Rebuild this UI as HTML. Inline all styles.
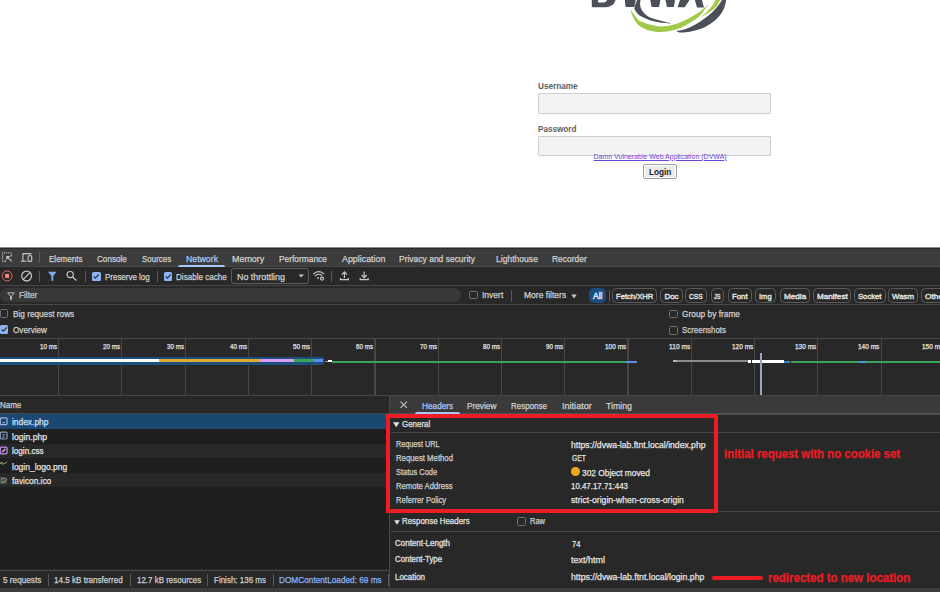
<!DOCTYPE html>
<html><head><meta charset="utf-8"><style>
html,body{margin:0;padding:0;}
body{width:940px;height:592px;overflow:hidden;position:relative;background:#fff;font-family:'Liberation Sans', sans-serif;}
.t{position:absolute;white-space:pre;font-family:'Liberation Sans', sans-serif;-webkit-text-stroke:0.25px currentColor;}
</style></head><body>
<svg style="position:absolute;left:0;top:0" width="940" height="40" viewBox="0 0 940 40">
<g fill="#4b4f58">
<path fill-rule="evenodd" d="M591.8,0 L591.8,6.6 Q591.8,7.3 592.5,7.3 L604,7.3 C611,7.3 614.5,4.2 615.5,0 Z M598.2,0 L598.2,2.5 L603,2.5 C605.5,2.5 606.8,1.3 607.1,0 Z"/>
<path d="M624.8,0 L625.6,6.9 L634.3,6.9 L635.8,0 Z"/>
<path d="M650.3,0 L651.6,7 L659,7 L660.4,0 Z"/>
<path d="M665.5,0 L667,7 L673.9,7 L675,0 Z"/>
<path d="M677.6,7.2 L684.8,7.2 L689.5,0 L680,0 Z"/>
<path d="M694.9,0 L701.9,0 L704,7.4 L697,7.4 Z"/>
<path d="M637.2,0 C636.87,0.83 635.63,3.50 635.20,5.00 C634.77,6.50 634.30,7.67 634.60,9.00 C634.90,10.33 635.93,11.78 637.00,13.00 C638.07,14.22 638.83,15.08 641.00,16.30 C643.17,17.52 646.83,19.27 650.00,20.30 C653.17,21.33 656.43,21.95 660.00,22.50 C663.57,23.05 669.50,23.42 671.40,23.60 L671.4,23.6 C669.50,23.10 663.57,21.62 660.00,20.60 C656.43,19.58 652.58,18.68 650.00,17.50 C647.42,16.32 645.97,14.92 644.50,13.50 C643.03,12.08 641.93,10.50 641.20,9.00 C640.47,7.50 640.22,6.00 640.10,4.50 C639.98,3.00 640.43,0.75 640.50,0.00 Z"/>
<path d="M676.2,31 C677.50,30.75 681.70,30.13 684.00,29.50 C686.30,28.87 687.48,28.40 690.00,27.20 C692.52,26.00 696.07,24.20 699.10,22.30 C702.13,20.40 705.67,17.85 708.20,15.80 C710.73,13.75 712.57,11.80 714.30,10.00 C716.03,8.20 717.33,6.67 718.60,5.00 C719.87,3.33 721.35,0.83 721.90,0.00 L726.2,0 C725.87,1.33 725.33,5.33 724.20,8.00 C723.07,10.67 721.52,13.50 719.40,16.00 C717.28,18.50 714.37,20.95 711.50,23.00 C708.63,25.05 705.78,26.83 702.20,28.30 C698.62,29.77 693.70,31.10 690.00,31.80 C686.30,32.50 682.30,32.63 680.00,32.50 C677.70,32.37 676.83,31.25 676.20,31.00 Z"/>
</g>
<g fill="#a3c94a">
<path d="M630.3,9 C630.67,10.17 631.55,13.78 632.50,16.00 C633.45,18.22 634.75,20.60 636.00,22.30 C637.25,24.00 637.67,24.78 640.00,26.20 C642.33,27.62 646.67,29.82 650.00,30.80 C653.33,31.78 656.67,32.07 660.00,32.10 C663.33,32.13 666.67,31.67 670.00,31.00 C673.33,30.33 676.67,29.47 680.00,28.10 C683.33,26.73 686.67,24.90 690.00,22.80 C693.33,20.70 696.92,18.60 700.00,15.50 C703.08,12.40 707.08,6.08 708.50,4.20 L708.5,4.2 C707.08,5.42 703.08,9.23 700.00,11.50 C696.92,13.77 693.33,15.97 690.00,17.80 C686.67,19.63 683.33,21.23 680.00,22.50 C676.67,23.77 673.33,24.73 670.00,25.40 C666.67,26.07 663.33,26.63 660.00,26.50 C656.67,26.37 653.33,25.53 650.00,24.60 C646.67,23.67 642.40,22.25 640.00,20.90 C637.60,19.55 637.22,18.48 635.60,16.50 C633.98,14.52 631.18,10.25 630.30,9.00 Z"/>
<path d="M699.1,18.2 C700.12,17.42 703.38,15.12 705.20,13.50 C707.02,11.88 708.62,10.08 710.00,8.50 C711.38,6.92 712.63,5.42 713.50,4.00 C714.37,2.58 714.92,0.67 715.20,0.00 L720.1,0 C719.67,0.83 718.47,3.58 717.50,5.00 C716.53,6.42 715.85,7.17 714.30,8.50 C712.75,9.83 710.73,11.38 708.20,13.00 C705.67,14.62 700.62,17.33 699.10,18.20 Z"/>
</g>
</svg>
<div style="position:absolute;left:538px;top:93px;width:233px;height:21px;background:#f3f3f3;box-sizing:border-box;border:1px solid #cfcfcf;border-radius:1px;"></div><div style="position:absolute;left:538px;top:136px;width:233px;height:20px;background:#f3f3f3;box-sizing:border-box;border:1px solid #cfcfcf;border-radius:1px;"></div><div style="position:absolute;left:643px;top:164px;width:34px;height:15px;background:#ececec;box-sizing:border-box;border:1px solid #a0a0a0;border-radius:2px;box-shadow:inset 0 0 0 1px #fff;"></div><div style="position:absolute;left:0px;top:247px;width:940px;height:1px;background:#8a8a8a;"></div><div style="position:absolute;left:0px;top:248px;width:940px;height:1px;background:#2a2a2a;"></div><div style="position:absolute;left:0px;top:266px;width:940px;height:326px;background:#282828;"></div><div style="position:absolute;left:0px;top:249px;width:940px;height:17px;background:#3c3c3c;"></div><div style="position:absolute;left:0px;top:266px;width:940px;height:1px;background:#474747;"></div><div style="position:absolute;left:0px;top:285px;width:940px;height:1px;background:#474747;"></div><div style="position:absolute;left:0px;top:304px;width:940px;height:1px;background:#474747;"></div><div style="position:absolute;left:0px;top:338px;width:940px;height:1px;background:#474747;"></div><div style="position:absolute;left:0px;top:394.5px;width:940px;height:1px;background:#474747;"></div><div style="position:absolute;left:178.3px;top:264.5px;width:46.7px;height:2px;background:#a8c7fa;border-radius:2px 2px 0 0;"></div><div style="position:absolute;left:39.2px;top:252px;width:1px;height:11px;background:#5a5a5a;"></div><div style="position:absolute;left:39.2px;top:271px;width:1px;height:11px;background:#5a5a5a;"></div><div style="position:absolute;left:84.5px;top:271px;width:1px;height:11px;background:#5a5a5a;"></div><div style="position:absolute;left:156.6px;top:271px;width:1px;height:11px;background:#5a5a5a;"></div><div style="position:absolute;left:331px;top:271px;width:1px;height:11px;background:#5a5a5a;"></div><div style="position:absolute;left:92px;top:272px;width:8.5px;height:8.5px;background:#8cb4f8;border-radius:1.5px;"><svg width="8.5" height="8.5" viewBox="0 0 10 10" style="position:absolute;left:0;top:0"><path d="M2 5.3 L4 7.2 L8 2.8" stroke="#2a2d33" stroke-width="1.4" fill="none"/></svg></div><div style="position:absolute;left:163.8px;top:272px;width:8.5px;height:8.5px;background:#8cb4f8;border-radius:1.5px;"><svg width="8.5" height="8.5" viewBox="0 0 10 10" style="position:absolute;left:0;top:0"><path d="M2 5.3 L4 7.2 L8 2.8" stroke="#2a2d33" stroke-width="1.4" fill="none"/></svg></div><div style="position:absolute;left:230.6px;top:268px;width:78px;height:16.2px;background:transparent;box-sizing:border-box;border:1px solid #5e5e5e;border-radius:3px;"></div><svg style="position:absolute;left:298px;top:274px" width="7" height="4" viewBox="0 0 7 4"><path d="M0.5 0.5 L6 0.5 L3.25 3.5 Z" fill="#c7c7c7"/></svg><div style="position:absolute;left:0px;top:288px;width:461px;height:13.6px;background:#383838;border-radius:7px;"></div><svg style="position:absolute;left:6.5px;top:291.5px" width="8" height="8" viewBox="0 0 8 8"><path d="M0.6 0.8 H7.4 L4.5 4.2 V7.4 H3.5 V4.2 Z" fill="none" stroke="#c7c7c7" stroke-width="0.9"/></svg><div style="position:absolute;left:469px;top:290.5px;width:8.5px;height:8.5px;box-sizing:border-box;border:1px solid #707070;border-radius:1.5px;"></div><div style="position:absolute;left:510.6px;top:289.5px;width:1px;height:12.0px;background:#5a5a5a;"></div><svg style="position:absolute;left:570.6px;top:293.6px" width="6" height="5" viewBox="0 0 6 5"><path d="M0.3 0.6 L5.7 0.6 L3 4.4 Z" fill="#c7c7c7"/></svg><div style="position:absolute;left:588.7px;top:287.9px;width:17px;height:14.9px;background:#1a4d7e;border-radius:5px;"></div><div style="position:absolute;left:609px;top:289.5px;width:1px;height:12.0px;background:#5a5a5a;"></div><div style="position:absolute;left:612px;top:287.8px;width:45.299999999999955px;height:14.8px;background:transparent;box-sizing:border-box;border:1px solid #5a5a5a;border-radius:4.5px;"></div><div style="position:absolute;left:660.4px;top:287.8px;width:22.300000000000068px;height:14.8px;background:transparent;box-sizing:border-box;border:1px solid #5a5a5a;border-radius:4.5px;"></div><div style="position:absolute;left:685.4px;top:287.8px;width:21.600000000000023px;height:14.8px;background:transparent;box-sizing:border-box;border:1px solid #5a5a5a;border-radius:4.5px;"></div><div style="position:absolute;left:710.6px;top:287.8px;width:13.600000000000023px;height:14.8px;background:transparent;box-sizing:border-box;border:1px solid #5a5a5a;border-radius:4.5px;"></div><div style="position:absolute;left:728.2px;top:287.8px;width:23.59999999999991px;height:14.8px;background:transparent;box-sizing:border-box;border:1px solid #5a5a5a;border-radius:4.5px;"></div><div style="position:absolute;left:755.3px;top:287.8px;width:20.700000000000045px;height:14.8px;background:transparent;box-sizing:border-box;border:1px solid #5a5a5a;border-radius:4.5px;"></div><div style="position:absolute;left:779.6px;top:287.8px;width:30.199999999999932px;height:14.8px;background:transparent;box-sizing:border-box;border:1px solid #5a5a5a;border-radius:4.5px;"></div><div style="position:absolute;left:812.7px;top:287.8px;width:38.69999999999993px;height:14.8px;background:transparent;box-sizing:border-box;border:1px solid #5a5a5a;border-radius:4.5px;"></div><div style="position:absolute;left:854.2px;top:287.8px;width:31.5px;height:14.8px;background:transparent;box-sizing:border-box;border:1px solid #5a5a5a;border-radius:4.5px;"></div><div style="position:absolute;left:888.3px;top:287.8px;width:30.0px;height:14.8px;background:transparent;box-sizing:border-box;border:1px solid #5a5a5a;border-radius:4.5px;"></div><div style="position:absolute;left:921.2px;top:287.8px;width:28.799999999999955px;height:14.8px;background:transparent;box-sizing:border-box;border:1px solid #5a5a5a;border-radius:4.5px;"></div><div style="position:absolute;left:-0.5px;top:309px;width:8.5px;height:8.5px;box-sizing:border-box;border:1px solid #707070;border-radius:1.5px;"></div><div style="position:absolute;left:-0.3px;top:325.3px;width:8.5px;height:8.5px;background:#8cb4f8;border-radius:1.5px;"><svg width="8.5" height="8.5" viewBox="0 0 10 10" style="position:absolute;left:0;top:0"><path d="M2 5.3 L4 7.2 L8 2.8" stroke="#2a2d33" stroke-width="1.4" fill="none"/></svg></div><div style="position:absolute;left:669.4px;top:309.5px;width:8.5px;height:8.5px;box-sizing:border-box;border:1px solid #707070;border-radius:1.5px;"></div><div style="position:absolute;left:669.4px;top:326px;width:8.5px;height:8.5px;box-sizing:border-box;border:1px solid #707070;border-radius:1.5px;"></div><div style="position:absolute;left:58.0px;top:339px;width:1.2px;height:55.5px;background:#474747;"></div><div style="position:absolute;left:121.27000000000001px;top:339px;width:1.2px;height:55.5px;background:#474747;"></div><div style="position:absolute;left:184.54000000000002px;top:339px;width:1.2px;height:55.5px;background:#474747;"></div><div style="position:absolute;left:247.81px;top:339px;width:1.2px;height:55.5px;background:#474747;"></div><div style="position:absolute;left:311.08px;top:339px;width:1.2px;height:55.5px;background:#474747;"></div><div style="position:absolute;left:374.35px;top:339px;width:1.2px;height:55.5px;background:#474747;"></div><div style="position:absolute;left:437.62px;top:339px;width:1.2px;height:55.5px;background:#474747;"></div><div style="position:absolute;left:500.89000000000004px;top:339px;width:1.2px;height:55.5px;background:#474747;"></div><div style="position:absolute;left:564.16px;top:339px;width:1.2px;height:55.5px;background:#474747;"></div><div style="position:absolute;left:627.4300000000001px;top:339px;width:1.2px;height:55.5px;background:#474747;"></div><div style="position:absolute;left:690.7px;top:339px;width:1.2px;height:55.5px;background:#474747;"></div><div style="position:absolute;left:753.97px;top:339px;width:1.2px;height:55.5px;background:#474747;"></div><div style="position:absolute;left:817.24px;top:339px;width:1.2px;height:55.5px;background:#474747;"></div><div style="position:absolute;left:880.51px;top:339px;width:1.2px;height:55.5px;background:#474747;"></div><div style="position:absolute;left:943.7800000000001px;top:339px;width:1.2px;height:55.5px;background:#474747;"></div><div style="position:absolute;left:-2px;top:357px;width:326px;height:7.7px;background:#1c4f7e;border-radius:1px;"></div><div style="position:absolute;left:0px;top:358.7px;width:159.1px;height:3.8px;background:#ffffff;"></div><div style="position:absolute;left:159.1px;top:358.7px;width:99.6px;height:3.8px;background:#e3a92c;"></div><div style="position:absolute;left:258.7px;top:358.7px;width:34.9px;height:3.8px;background:#d99cf0;"></div><div style="position:absolute;left:293.6px;top:358.7px;width:20.4px;height:3.8px;background:#3aa55a;"></div><div style="position:absolute;left:314px;top:358.7px;width:9px;height:3.8px;background:#5b8ded;"></div><div style="position:absolute;left:324.5px;top:360.5px;width:3px;height:1.5px;background:#9a9a9a;"></div><div style="position:absolute;left:327.5px;top:360.2px;width:4px;height:2px;background:#ffffff;"></div><div style="position:absolute;left:332px;top:360.5px;width:294px;height:2px;background:#3aa55a;"></div><div style="position:absolute;left:626px;top:360.5px;width:11px;height:2px;background:#5b8ded;"></div><div style="position:absolute;left:673px;top:360.4px;width:75px;height:1.9px;background:#8c8c8c;"></div><div style="position:absolute;left:673px;top:360.4px;width:4px;height:1.9px;background:#b0b0b0;"></div><div style="position:absolute;left:748px;top:360px;width:3px;height:2.5px;background:#ffffff;"></div><div style="position:absolute;left:752px;top:360px;width:31.8px;height:2.5px;background:#ffffff;"></div><div style="position:absolute;left:783.8px;top:360.5px;width:6.2px;height:2px;background:#2a8ac8;"></div><div style="position:absolute;left:791px;top:360.5px;width:68px;height:2px;background:#3aa55a;"></div><div style="position:absolute;left:859px;top:360.5px;width:7px;height:2px;background:#5b8ded;"></div><div style="position:absolute;left:866px;top:360.5px;width:80px;height:2px;background:#3aa55a;"></div><div style="position:absolute;left:760.4px;top:353px;width:1.6px;height:41.5px;background:#98a6c4;"></div><div style="position:absolute;left:0px;top:413px;width:389.5px;height:1px;background:#474747;"></div><div style="position:absolute;left:0px;top:487.1px;width:389.5px;height:82px;background:#1f1f1f;"></div><div style="position:absolute;left:0px;top:413.7px;width:386px;height:15.3px;background:#1b4870;"></div><div style="position:absolute;left:0px;top:429px;width:389.5px;height:14.5px;background:#1f1f1f;"></div><div style="position:absolute;left:0px;top:443.5px;width:389.5px;height:14.5px;background:#282828;"></div><div style="position:absolute;left:0px;top:458px;width:389.5px;height:14.6px;background:#1f1f1f;"></div><div style="position:absolute;left:0px;top:472.6px;width:389.5px;height:14.5px;background:#282828;"></div><div style="position:absolute;left:0px;top:569.5px;width:389.5px;height:1px;background:#474747;"></div><div style="position:absolute;left:0px;top:588px;width:940px;height:4px;background:#3c3c3c;"></div><div style="position:absolute;left:47.9px;top:574px;width:1px;height:12px;background:#5a5a5a;"></div><div style="position:absolute;left:130.2px;top:574px;width:1px;height:12px;background:#5a5a5a;"></div><div style="position:absolute;left:207.4px;top:574px;width:1px;height:12px;background:#5a5a5a;"></div><div style="position:absolute;left:272.7px;top:574px;width:1px;height:12px;background:#5a5a5a;"></div><div style="position:absolute;left:388.4px;top:574px;width:1px;height:12px;background:#5a5a5a;"></div><div style="position:absolute;left:389.5px;top:395.5px;width:550.5px;height:192.5px;background:#282828;"></div><div style="position:absolute;left:389px;top:395.5px;width:1px;height:193px;background:#474747;"></div><div style="position:absolute;left:390px;top:395.5px;width:550px;height:17.8px;background:#3a3a3a;"></div><div style="position:absolute;left:390px;top:413.3px;width:550px;height:1.6px;background:#505050;"></div><svg style="position:absolute;left:400px;top:401px" width="7.5" height="7.5" viewBox="0 0 8 8"><path d="M0.6 0.6 L7.4 7.4 M7.4 0.6 L0.6 7.4" stroke="#c7c7c7" stroke-width="1.1"/></svg><div style="position:absolute;left:415.1px;top:411.8px;width:44.7px;height:2.2px;background:#a8c7fa;border-radius:2px 2px 0 0;"></div><svg style="position:absolute;left:393px;top:421.8px" width="6.5" height="5.5" viewBox="0 0 6 5"><path d="M0 0.2 L6 0.2 L3 4.8 Z" fill="#e3e3e3"/></svg><div style="position:absolute;left:390.5px;top:432.3px;width:550px;height:1px;background:#474747;"></div><div style="position:absolute;left:571px;top:467.3px;width:8.6px;height:8.6px;border-radius:50%;background:#f0a520"></div><div style="position:absolute;left:390.5px;top:531px;width:550px;height:1px;background:#474747;"></div><div style="position:absolute;left:390px;top:511px;width:550px;height:1px;background:#474747;"></div><div style="position:absolute;left:386.3px;top:414px;width:331.5px;height:99px;background:transparent;box-sizing:border-box;border:4px solid #ee1c25;"></div><svg style="position:absolute;left:393.5px;top:519.5px" width="6" height="5" viewBox="0 0 6 5"><path d="M0.2 0.3 L5.8 0.3 L3 4.7 Z" fill="#e3e3e3"/></svg><div style="position:absolute;left:517.2px;top:517.3px;width:8.5px;height:8.5px;box-sizing:border-box;border:1px solid #707070;border-radius:1.5px;"></div><div style="position:absolute;left:711.5px;top:575.8px;width:51.8px;height:4.4px;background:#ed1c24;border-radius:2px;"></div>
<svg style="position:absolute;left:0;top:250px" width="14" height="14" viewBox="0 250 14 14">
<g fill="#c7c7c7">
<rect x="2" y="252.3" width="1.1" height="1.1"/><rect x="4" y="252.3" width="1.1" height="1.1"/><rect x="6" y="252.3" width="1.1" height="1.1"/><rect x="8" y="252.3" width="1.1" height="1.1"/><rect x="10.6" y="252.3" width="1.2" height="1.1"/>
<rect x="2" y="254.3" width="1.1" height="1.1"/><rect x="2" y="256.3" width="1.1" height="1.1"/><rect x="2" y="258.3" width="1.1" height="1.1"/><rect x="2" y="260.6" width="1.1" height="1.2"/>
<rect x="10.6" y="254.3" width="1.1" height="2.2"/><rect x="4" y="260.6" width="2.2" height="1.1"/>
</g>
<path d="M7.2,256.8 L11.8,261.4" stroke="#c7c7c7" stroke-width="1.2"/>
<path d="M6.3,256 L10.3,256 L6.3,260 Z" fill="#c7c7c7"/>
</svg><svg style="position:absolute;left:19px;top:250px" width="15" height="14" viewBox="19 250 15 14">
<path d="M22.9,261.2 V253.6 H30.7 V254.8" stroke="#c7c7c7" stroke-width="1.1" fill="none"/>
<path d="M21,261.2 H26.5" stroke="#c7c7c7" stroke-width="1.1"/>
<rect x="28.1" y="255.7" width="3.6" height="5.7" rx="0.6" stroke="#c7c7c7" stroke-width="1.1" fill="none"/>
</svg><svg style="position:absolute;left:0;top:269px" width="14" height="14" viewBox="0 269 14 14">
<circle cx="7.1" cy="275.9" r="5" stroke="#e46962" stroke-width="1" fill="none"/>
<rect x="5.1" y="273.9" width="4" height="4" fill="#f28b82"/>
</svg><svg style="position:absolute;left:19px;top:269px" width="15" height="14" viewBox="19 269 15 14">
<circle cx="26.6" cy="276" r="4.9" stroke="#c7c7c7" stroke-width="1.2" fill="none"/>
<path d="M29.9,272.7 L23.3,279.3" stroke="#c7c7c7" stroke-width="1.2"/>
</svg><svg style="position:absolute;left:46px;top:270px" width="12" height="12" viewBox="46 270 12 12">
<path d="M48,271.7 H56.7 L53.3,276 V280.7 H51.4 V276 Z" fill="#7cacf8"/>
</svg><svg style="position:absolute;left:65px;top:270px" width="13" height="12" viewBox="65 270 13 12">
<circle cx="70.2" cy="274.6" r="3.1" stroke="#c7c7c7" stroke-width="1.2" fill="none"/>
<path d="M72.6,277.1 L76.4,280.6" stroke="#c7c7c7" stroke-width="1.3"/>
</svg><svg style="position:absolute;left:311px;top:269px" width="16" height="13" viewBox="311 269 16 13">
<path d="M313.3,274.2 C316.5,270.8 321,270.8 324.2,274.2" stroke="#c7c7c7" stroke-width="1.2" fill="none"/>
<path d="M315,276 C317,274 320,274 322,275.7" stroke="#c7c7c7" stroke-width="1.2" fill="none"/>
<circle cx="318" cy="278" r="0.9" fill="#c7c7c7"/>
<circle cx="322" cy="278.6" r="1.5" stroke="#c7c7c7" stroke-width="1.1" fill="none"/>
</svg><svg style="position:absolute;left:338px;top:269px" width="13" height="13" viewBox="338 269 13 13">
<path d="M344.4,278 V272" stroke="#c7c7c7" stroke-width="1.2"/>
<path d="M341.8,274.6 L344.4,271.8 L347,274.6" stroke="#c7c7c7" stroke-width="1.2" fill="none"/>
<path d="M340.4,278 V279.7 H348.4 V278" stroke="#c7c7c7" stroke-width="1.2" fill="none"/>
</svg><svg style="position:absolute;left:358px;top:269px" width="13" height="13" viewBox="358 269 13 13">
<path d="M364.2,271.4 V277.4" stroke="#c7c7c7" stroke-width="1.2"/>
<path d="M361.6,275 L364.2,277.8 L366.8,275" stroke="#c7c7c7" stroke-width="1.2" fill="none"/>
<path d="M360.2,278 V279.7 H368.2 V278" stroke="#c7c7c7" stroke-width="1.2" fill="none"/>
</svg><svg style="position:absolute;left:-0.7px;top:416px" width="10" height="70" viewBox="0 416 10 70">
<rect x="1.3" y="417.9" width="6.8" height="6.8" rx="1.2" stroke="#9db4e0" stroke-width="1.2" fill="none"/>
<path d="M3.4,422.6 H6" stroke="#9db4e0" stroke-width="1"/>
<rect x="1.3" y="432.2" width="6.8" height="6.8" rx="1.2" stroke="#8a9cc4" stroke-width="1.2" fill="none"/>
<path d="M3.2,434.4 H6.2 M3.2,436 H6.2 M3.2,437.5 H5.2" stroke="#8a9cc4" stroke-width="0.8"/>
<rect x="1.3" y="447.1" width="6.8" height="6.8" rx="1.2" stroke="#c58af9" stroke-width="1.2" fill="none"/>
<path d="M3.2,452.2 L6.3,449" stroke="#e6ccff" stroke-width="1.1"/>
<path d="M1.2,463.4 C3.5,464.6 6,464 8.2,461.6" stroke="#8fa86a" stroke-width="1" fill="none"/>
<path d="M1.2,462.6 H4.2" stroke="#8a8a8a" stroke-width="0.9"/>
<rect x="1" y="477" width="7" height="7" fill="#4a4d4f"/>
<path d="M1.8,481.6 C4,483 6.5,482 7.6,478.8" stroke="#9bbf5a" stroke-width="1" fill="none"/>
<path d="M2,479.5 C3,478.5 5,478.3 6,478.6" stroke="#aaa" stroke-width="0.7" fill="none"/>
</svg>
<div class="t" style="left:538.30px;top:80.00px;font-size:9.5px;line-height:11.875px;font-weight:700;color:#606060;transform:scaleX(0.8639);transform-origin:0 0;-webkit-text-stroke:0;">Username</div><div class="t" style="left:538.30px;top:122.60px;font-size:9.5px;line-height:11.875px;font-weight:700;color:#606060;transform:scaleX(0.8576);transform-origin:0 0;-webkit-text-stroke:0;">Password</div><div class="t" style="left:593.50px;top:152.60px;font-size:7px;line-height:8.75px;font-weight:400;color:#6a45dc;text-decoration:underline;-webkit-text-stroke:0;">Damn Vulnerable Web Application (DVWA)</div><div class="t" style="left:648.80px;top:165.90px;font-size:9.5px;line-height:11.875px;font-weight:700;color:#1e1e1e;transform:scaleX(0.8662);transform-origin:0 0;-webkit-text-stroke:0;">Login</div><div class="t" style="left:48.50px;top:253.50px;font-size:9px;line-height:11.25px;font-weight:400;color:#d0d0d0;transform:scaleX(0.8926);transform-origin:0 0;">Elements</div><div class="t" style="left:97.00px;top:253.50px;font-size:9px;line-height:11.25px;font-weight:400;color:#d0d0d0;transform:scaleX(0.9022);transform-origin:0 0;">Console</div><div class="t" style="left:141.70px;top:253.50px;font-size:9px;line-height:11.25px;font-weight:400;color:#d0d0d0;transform:scaleX(0.8840);transform-origin:0 0;">Sources</div><div class="t" style="left:185.70px;top:253.50px;font-size:9px;line-height:11.25px;font-weight:400;color:#a8c7fa;transform:scaleX(0.9692);transform-origin:0 0;">Network</div><div class="t" style="left:232.40px;top:253.50px;font-size:9px;line-height:11.25px;font-weight:400;color:#d0d0d0;transform:scaleX(0.9903);transform-origin:0 0;">Memory</div><div class="t" style="left:279.30px;top:253.50px;font-size:9px;line-height:11.25px;font-weight:400;color:#d0d0d0;transform:scaleX(0.9295);transform-origin:0 0;">Performance</div><div class="t" style="left:341.70px;top:253.50px;font-size:9px;line-height:11.25px;font-weight:400;color:#d0d0d0;transform:scaleX(0.9857);transform-origin:0 0;">Application</div><div class="t" style="left:399.40px;top:253.50px;font-size:9px;line-height:11.25px;font-weight:400;color:#d0d0d0;transform:scaleX(0.9425);transform-origin:0 0;">Privacy and security</div><div class="t" style="left:495.70px;top:253.50px;font-size:9px;line-height:11.25px;font-weight:400;color:#d0d0d0;transform:scaleX(0.9513);transform-origin:0 0;">Lighthouse</div><div class="t" style="left:551.90px;top:253.50px;font-size:9px;line-height:11.25px;font-weight:400;color:#d0d0d0;transform:scaleX(0.9374);transform-origin:0 0;">Recorder</div><div class="t" style="left:104.90px;top:272.00px;font-size:9px;line-height:11.25px;font-weight:400;color:#d0d0d0;transform:scaleX(0.8846);transform-origin:0 0;">Preserve log</div><div class="t" style="left:176.00px;top:272.00px;font-size:9px;line-height:11.25px;font-weight:400;color:#d0d0d0;transform:scaleX(0.8986);transform-origin:0 0;">Disable cache</div><div class="t" style="left:236.70px;top:272.00px;font-size:9px;line-height:11.25px;font-weight:400;color:#d0d0d0;transform:scaleX(0.9891);transform-origin:0 0;">No throttling</div><div class="t" style="left:18.70px;top:290.40px;font-size:9px;line-height:11.25px;font-weight:400;color:#c7c7c7;transform:scaleX(0.9150);transform-origin:0 0;">Filter</div><div class="t" style="left:481.70px;top:290.40px;font-size:9px;line-height:11.25px;font-weight:400;color:#d0d0d0;transform:scaleX(0.9460);transform-origin:0 0;">Invert</div><div class="t" style="left:523.80px;top:290.40px;font-size:9px;line-height:11.25px;font-weight:400;color:#d0d0d0;transform:scaleX(0.9480);transform-origin:0 0;">More filters</div><div class="t" style="left:592.80px;top:290.90px;font-size:8.5px;line-height:10.625px;font-weight:400;color:#d6ebff;transform:scaleX(0.9944);transform-origin:0 0;-webkit-text-stroke:0.45px currentColor;">All</div><div class="t" style="left:616.00px;top:291.80px;font-size:8px;line-height:10.0px;font-weight:400;color:#e3e3e3;transform:scaleX(0.9534);transform-origin:0 0;-webkit-text-stroke:0.4px currentColor;">Fetch/XHR</div><div class="t" style="left:664.40px;top:291.80px;font-size:8px;line-height:10.0px;font-weight:400;color:#e3e3e3;-webkit-text-stroke:0.4px currentColor;">Doc</div><div class="t" style="left:689.40px;top:291.80px;font-size:8px;line-height:10.0px;font-weight:400;color:#e3e3e3;transform:scaleX(0.8266);transform-origin:0 0;-webkit-text-stroke:0.4px currentColor;">CSS</div><div class="t" style="left:714.20px;top:291.80px;font-size:8px;line-height:10.0px;font-weight:400;color:#e3e3e3;transform:scaleX(0.6849);transform-origin:0 0;-webkit-text-stroke:0.4px currentColor;">JS</div><div class="t" style="left:732.20px;top:291.80px;font-size:8px;line-height:10.0px;font-weight:400;color:#e3e3e3;transform:scaleX(0.9740);transform-origin:0 0;-webkit-text-stroke:0.4px currentColor;">Font</div><div class="t" style="left:759.30px;top:291.80px;font-size:8px;line-height:10.0px;font-weight:400;color:#e3e3e3;transform:scaleX(0.9518);transform-origin:0 0;-webkit-text-stroke:0.4px currentColor;">Img</div><div class="t" style="left:783.60px;top:291.80px;font-size:8px;line-height:10.0px;font-weight:400;color:#e3e3e3;transform:scaleX(1.0185);transform-origin:0 0;-webkit-text-stroke:0.4px currentColor;">Media</div><div class="t" style="left:816.70px;top:291.80px;font-size:8px;line-height:10.0px;font-weight:400;color:#e3e3e3;transform:scaleX(1.0154);transform-origin:0 0;-webkit-text-stroke:0.4px currentColor;">Manifest</div><div class="t" style="left:858.20px;top:291.80px;font-size:8px;line-height:10.0px;font-weight:400;color:#e3e3e3;transform:scaleX(0.9604);transform-origin:0 0;-webkit-text-stroke:0.4px currentColor;">Socket</div><div class="t" style="left:892.30px;top:291.80px;font-size:8px;line-height:10.0px;font-weight:400;color:#e3e3e3;transform:scaleX(0.9832);transform-origin:0 0;-webkit-text-stroke:0.4px currentColor;">Wasm</div><div class="t" style="left:925.20px;top:291.80px;font-size:8px;line-height:10.0px;font-weight:400;color:#e3e3e3;transform:scaleX(1.0392);transform-origin:0 0;-webkit-text-stroke:0.4px currentColor;">Other</div><div class="t" style="left:12.80px;top:308.60px;font-size:9px;line-height:11.25px;font-weight:400;color:#d0d0d0;transform:scaleX(0.9130);transform-origin:0 0;">Big request rows</div><div class="t" style="left:12.80px;top:325.00px;font-size:9px;line-height:11.25px;font-weight:400;color:#d0d0d0;transform:scaleX(0.9063);transform-origin:0 0;">Overview</div><div class="t" style="left:682.00px;top:308.70px;font-size:9px;line-height:11.25px;font-weight:400;color:#d0d0d0;transform:scaleX(0.9275);transform-origin:0 0;">Group by frame</div><div class="t" style="left:682.00px;top:325.00px;font-size:9px;line-height:11.25px;font-weight:400;color:#d0d0d0;transform:scaleX(0.8795);transform-origin:0 0;">Screenshots</div><div class="t" style="left:40.10px;top:342.60px;font-size:7px;line-height:8.75px;font-weight:400;color:#e3e3e3;transform:scaleX(0.8918);transform-origin:0 0;">10 ms</div><div class="t" style="left:103.37px;top:342.60px;font-size:7px;line-height:8.75px;font-weight:400;color:#e3e3e3;transform:scaleX(0.8918);transform-origin:0 0;">20 ms</div><div class="t" style="left:166.64px;top:342.60px;font-size:7px;line-height:8.75px;font-weight:400;color:#e3e3e3;transform:scaleX(0.8918);transform-origin:0 0;">30 ms</div><div class="t" style="left:229.91px;top:342.60px;font-size:7px;line-height:8.75px;font-weight:400;color:#e3e3e3;transform:scaleX(0.8918);transform-origin:0 0;">40 ms</div><div class="t" style="left:293.18px;top:342.60px;font-size:7px;line-height:8.75px;font-weight:400;color:#e3e3e3;transform:scaleX(0.8918);transform-origin:0 0;">50 ms</div><div class="t" style="left:356.45px;top:342.60px;font-size:7px;line-height:8.75px;font-weight:400;color:#e3e3e3;transform:scaleX(0.8918);transform-origin:0 0;">60 ms</div><div class="t" style="left:419.72px;top:342.60px;font-size:7px;line-height:8.75px;font-weight:400;color:#e3e3e3;transform:scaleX(0.8918);transform-origin:0 0;">70 ms</div><div class="t" style="left:482.99px;top:342.60px;font-size:7px;line-height:8.75px;font-weight:400;color:#e3e3e3;transform:scaleX(0.8918);transform-origin:0 0;">80 ms</div><div class="t" style="left:546.26px;top:342.60px;font-size:7px;line-height:8.75px;font-weight:400;color:#e3e3e3;transform:scaleX(0.8918);transform-origin:0 0;">90 ms</div><div class="t" style="left:605.23px;top:342.60px;font-size:7px;line-height:8.75px;font-weight:400;color:#e3e3e3;transform:scaleX(0.9273);transform-origin:0 0;">100 ms</div><div class="t" style="left:668.50px;top:342.60px;font-size:7px;line-height:8.75px;font-weight:400;color:#e3e3e3;transform:scaleX(0.9493);transform-origin:0 0;">110 ms</div><div class="t" style="left:731.77px;top:342.60px;font-size:7px;line-height:8.75px;font-weight:400;color:#e3e3e3;transform:scaleX(0.9273);transform-origin:0 0;">120 ms</div><div class="t" style="left:795.04px;top:342.60px;font-size:7px;line-height:8.75px;font-weight:400;color:#e3e3e3;transform:scaleX(0.9273);transform-origin:0 0;">130 ms</div><div class="t" style="left:858.31px;top:342.60px;font-size:7px;line-height:8.75px;font-weight:400;color:#e3e3e3;transform:scaleX(0.9273);transform-origin:0 0;">140 ms</div><div class="t" style="left:921.58px;top:342.60px;font-size:7px;line-height:8.75px;font-weight:400;color:#e3e3e3;transform:scaleX(0.9273);transform-origin:0 0;">150 ms</div><div class="t" style="left:0.00px;top:399.90px;font-size:9px;line-height:11.25px;font-weight:400;color:#d0d0d0;transform:scaleX(0.8869);transform-origin:0 0;">Name</div><div class="t" style="left:11.70px;top:416.90px;font-size:9px;line-height:11.25px;font-weight:400;color:#d3e3fd;transform:scaleX(0.9322);transform-origin:0 0;">index.php</div><div class="t" style="left:11.90px;top:432.00px;font-size:9px;line-height:11.25px;font-weight:400;color:#e3e3e3;transform:scaleX(0.9604);transform-origin:0 0;">login.php</div><div class="t" style="left:11.90px;top:446.30px;font-size:9px;line-height:11.25px;font-weight:400;color:#e3e3e3;transform:scaleX(0.9025);transform-origin:0 0;">login.css</div><div class="t" style="left:11.90px;top:461.50px;font-size:9px;line-height:11.25px;font-weight:400;color:#e3e3e3;transform:scaleX(0.9443);transform-origin:0 0;">login_logo.png</div><div class="t" style="left:11.90px;top:475.60px;font-size:9px;line-height:11.25px;font-weight:400;color:#e3e3e3;transform:scaleX(0.9217);transform-origin:0 0;">favicon.ico</div><div class="t" style="left:2.60px;top:575.00px;font-size:9px;line-height:11.25px;font-weight:400;color:#d0d0d0;transform:scaleX(0.9112);transform-origin:0 0;">5 requests</div><div class="t" style="left:54.30px;top:575.00px;font-size:9px;line-height:11.25px;font-weight:400;color:#d0d0d0;transform:scaleX(0.8975);transform-origin:0 0;">14.5 kB transferred</div><div class="t" style="left:136.80px;top:575.00px;font-size:9px;line-height:11.25px;font-weight:400;color:#d0d0d0;transform:scaleX(0.8849);transform-origin:0 0;">12.7 kB resources</div><div class="t" style="left:214.00px;top:575.00px;font-size:9px;line-height:11.25px;font-weight:400;color:#d0d0d0;transform:scaleX(0.8884);transform-origin:0 0;">Finish: 136 ms</div><div class="t" style="left:279.40px;top:575.00px;font-size:9px;line-height:11.25px;font-weight:400;color:#8ab4f8;transform:scaleX(0.9165);transform-origin:0 0;">DOMContentLoaded: 69 ms</div><div class="t" style="left:422.00px;top:400.80px;font-size:9px;line-height:11.25px;font-weight:400;color:#a8c7fa;transform:scaleX(0.9168);transform-origin:0 0;">Headers</div><div class="t" style="left:467.40px;top:400.80px;font-size:9px;line-height:11.25px;font-weight:400;color:#d0d0d0;transform:scaleX(0.9183);transform-origin:0 0;">Preview</div><div class="t" style="left:511.30px;top:400.80px;font-size:9px;line-height:11.25px;font-weight:400;color:#d0d0d0;transform:scaleX(0.8857);transform-origin:0 0;">Response</div><div class="t" style="left:561.70px;top:400.80px;font-size:9px;line-height:11.25px;font-weight:400;color:#d0d0d0;transform:scaleX(1.0096);transform-origin:0 0;">Initiator</div><div class="t" style="left:606.40px;top:400.80px;font-size:9px;line-height:11.25px;font-weight:400;color:#d0d0d0;transform:scaleX(0.9711);transform-origin:0 0;">Timing</div><div class="t" style="left:401.80px;top:418.70px;font-size:9px;line-height:11.25px;font-weight:400;color:#e3e3e3;transform:scaleX(0.8804);transform-origin:0 0;">General</div><div class="t" style="left:395.70px;top:439.00px;font-size:8.5px;line-height:10.625px;font-weight:400;color:#d0d0d0;transform:scaleX(0.8524);transform-origin:0 0;">Request URL</div><div class="t" style="left:395.70px;top:453.00px;font-size:8.5px;line-height:10.625px;font-weight:400;color:#d0d0d0;transform:scaleX(0.9138);transform-origin:0 0;">Request Method</div><div class="t" style="left:395.70px;top:466.80px;font-size:8.5px;line-height:10.625px;font-weight:400;color:#d0d0d0;transform:scaleX(0.8807);transform-origin:0 0;">Status Code</div><div class="t" style="left:395.70px;top:480.90px;font-size:8.5px;line-height:10.625px;font-weight:400;color:#d0d0d0;transform:scaleX(0.9022);transform-origin:0 0;">Remote Address</div><div class="t" style="left:395.70px;top:494.80px;font-size:8.5px;line-height:10.625px;font-weight:400;color:#d0d0d0;transform:scaleX(0.8912);transform-origin:0 0;">Referrer Policy</div><div class="t" style="left:571.00px;top:439.80px;font-size:8.5px;line-height:10.625px;font-weight:400;color:#e3e3e3;transform:scaleX(1.0129);transform-origin:0 0;">https://dvwa-lab.ftnt.local/index.php</div><div class="t" style="left:571.60px;top:453.40px;font-size:8.5px;line-height:10.625px;font-weight:400;color:#e3e3e3;transform:scaleX(0.7950);transform-origin:0 0;">GET</div><div class="t" style="left:582.00px;top:467.50px;font-size:8.5px;line-height:10.625px;font-weight:400;color:#e3e3e3;transform:scaleX(0.9843);transform-origin:0 0;">302 Object moved</div><div class="t" style="left:571.00px;top:481.10px;font-size:8.5px;line-height:10.625px;font-weight:400;color:#e3e3e3;transform:scaleX(0.9275);transform-origin:0 0;">10.47.17.71:443</div><div class="t" style="left:571.00px;top:495.00px;font-size:8.5px;line-height:10.625px;font-weight:400;color:#e3e3e3;transform:scaleX(1.0127);transform-origin:0 0;">strict-origin-when-cross-origin</div><div class="t" style="left:401.60px;top:516.00px;font-size:9px;line-height:11.25px;font-weight:400;color:#e3e3e3;transform:scaleX(0.8774);transform-origin:0 0;">Response Headers</div><div class="t" style="left:530.00px;top:516.00px;font-size:9px;line-height:11.25px;font-weight:400;color:#d0d0d0;transform:scaleX(0.8326);transform-origin:0 0;">Raw</div><div class="t" style="left:395.20px;top:538.00px;font-size:8.5px;line-height:10.625px;font-weight:400;color:#d0d0d0;transform:scaleX(0.9384);transform-origin:0 0;-webkit-text-stroke:0.45px currentColor;">Content-Length</div><div class="t" style="left:395.20px;top:554.40px;font-size:8.5px;line-height:10.625px;font-weight:400;color:#d0d0d0;transform:scaleX(0.9230);transform-origin:0 0;-webkit-text-stroke:0.45px currentColor;">Content-Type</div><div class="t" style="left:395.20px;top:571.50px;font-size:8.5px;line-height:10.625px;font-weight:400;color:#d0d0d0;transform:scaleX(0.9334);transform-origin:0 0;-webkit-text-stroke:0.45px currentColor;">Location</div><div class="t" style="left:571.60px;top:538.70px;font-size:8.5px;line-height:10.625px;font-weight:400;color:#e3e3e3;transform:scaleX(0.8871);transform-origin:0 0;">74</div><div class="t" style="left:571.00px;top:555.20px;font-size:8.5px;line-height:10.625px;font-weight:400;color:#e3e3e3;transform:scaleX(1.0615);transform-origin:0 0;">text/html</div><div class="t" style="left:571.00px;top:572.20px;font-size:8.5px;line-height:10.625px;font-weight:400;color:#e3e3e3;transform:scaleX(1.0221);transform-origin:0 0;">https://dvwa-lab.ftnt.local/login.php</div><div class="t" style="left:724.30px;top:446.80px;font-size:12px;line-height:15.0px;font-weight:700;color:#ed1c24;transform:scaleX(0.9500);transform-origin:0 0;">initial request with no cookie set</div><div class="t" style="left:767.70px;top:570.70px;font-size:12px;line-height:15.0px;font-weight:700;color:#ed1c24;transform:scaleX(0.9563);transform-origin:0 0;">redirected to new location</div>
</body></html>
